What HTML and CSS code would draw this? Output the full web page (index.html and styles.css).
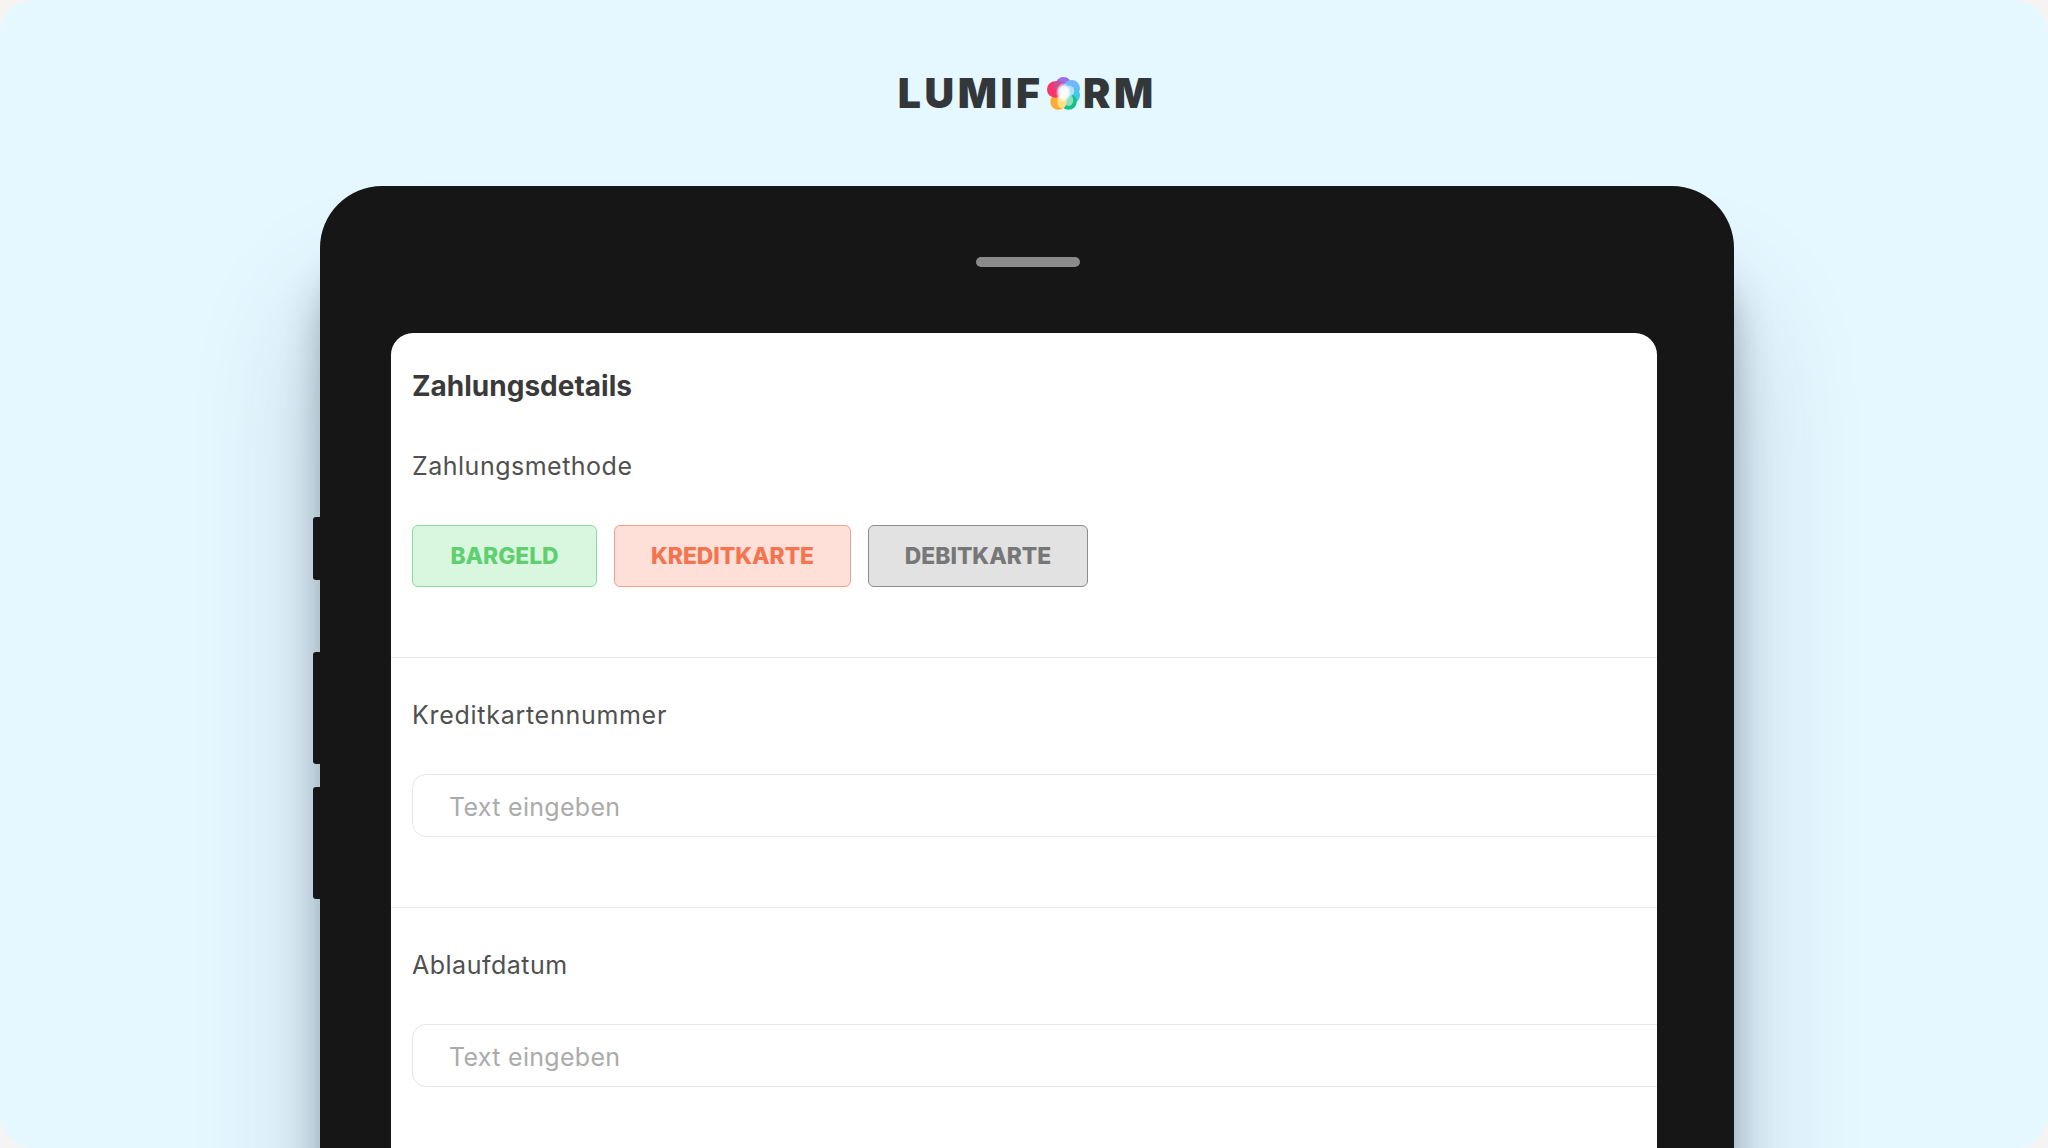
FILE: index.html
```html
<!DOCTYPE html>
<html lang="de">
<head>
<meta charset="utf-8">
<title>Lumiform</title>
<link rel="stylesheet" href="styles.css">
</head>
<body>
<div class="frame">
  <header class="brand">
    <div class="logo">
      <span class="logo-text">LUMIF</span>
      <svg class="logo-mark" viewBox="0 0 32 32" aria-hidden="true">
        <defs>
          <radialGradient id="glow" cx="50%" cy="50%" r="50%">
            <stop offset="0" stop-color="#ffffff"/>
            <stop offset=".6" stop-color="#ffffff" stop-opacity=".9"/>
            <stop offset="1" stop-color="#ffffff" stop-opacity="0"/>
          </radialGradient>
        </defs>
        <circle cx="16" cy="8" r="8" fill="#9c6ee8"/>
        <circle cx="24" cy="11" r="8" fill="#6fb9f8"/>
        <circle cx="24.5" cy="18" r="7.5" fill="#45c8e8"/>
        <circle cx="21" cy="24" r="7.8" fill="#12bf86"/>
        <circle cx="11" cy="24" r="7.8" fill="#ffab38"/>
        <circle cx="8" cy="12" r="8" fill="#f7356b"/>
        <circle cx="11.5" cy="8.5" r="5" fill="#c0549c" opacity=".8"/>
        <ellipse cx="21" cy="22.5" rx="4.5" ry="5.5" fill="#9fe8c8" opacity=".85"/>
        <ellipse cx="14.5" cy="24" rx="4.5" ry="6.5" fill="#ffe08a" opacity=".95"/>
        <ellipse cx="22" cy="13.5" rx="4.5" ry="5" fill="#b8e2fb" opacity=".9"/>
        <ellipse cx="16" cy="15" rx="7.5" ry="9.5" fill="url(#glow)"/>
      </svg>
      <span class="logo-text">RM</span>
    </div>
  </header>

  <div class="device">
    <span class="side-key key-a"></span>
    <span class="side-key key-b"></span>
    <span class="side-key key-c"></span>
    <div class="speaker"></div>
    <main class="screen">
      <section class="group group-first">
        <h1 class="title">Zahlungsdetails</h1>
        <div class="label label-method">Zahlungsmethode</div>
        <div class="choices">
          <div class="choice choice-green">BARGELD</div>
          <div class="choice choice-orange">KREDITKARTE</div>
          <div class="choice choice-grey">DEBITKARTE</div>
        </div>
      </section>
      <section class="group">
        <div class="label label-wide">Kreditkartennummer</div>
        <div class="field">Text eingeben</div>
      </section>
      <section class="group">
        <div class="label">Ablaufdatum</div>
        <div class="field">Text eingeben</div>
      </section>
    </main>
  </div>
</div>
</body>
</html>
```
FILE: styles.css
```css
* { box-sizing: border-box; }
html, body {
  margin: 0;
  height: 100%;
  overflow: hidden;
  background: #f5f4f3;
}
.frame {
  width: 2048px;
  height: 1148px;
  overflow: hidden;
  border-radius: 34px;
  background: #e5f7ff;
  font-family: "Inter", "Liberation Sans", sans-serif;
}
.brand {
  height: 186px;
  display: flex;
  align-items: center;
  justify-content: center;
}
.logo {
  display: flex;
  align-items: center;
  gap: 3px;
  margin-left: 6.6px;
}
.logo-text {
  font-family: "Inter", sans-serif;
  font-weight: 900;
  font-size: 41px;
  line-height: 44px;
  letter-spacing: 3.6px;
  color: #33373a;
}
.logo-mark {
  width: 33px;
  height: 33px;
  margin-right: .4px;
  filter: blur(.5px);
}
.device {
  position: relative;
  width: 1414px;
  height: 1100px;
  margin-left: 320px;
  padding: 71px 77px 0 71px;
  background: #161616;
  border-radius: 62px;
  box-shadow: 0 80px 36px rgba(40, 50, 60, .34), 0 120px 120px rgba(60, 95, 120, .26);
}
.side-key {
  position: absolute;
  left: -7px;
  width: 8px;
  background: #161616;
  border-radius: 3px 0 0 3px;
}
.key-a { top: 331px; height: 63px; }
.key-b { top: 466px; height: 112px; }
.key-c { top: 601px; height: 112px; }
.speaker {
  width: 104px;
  height: 10px;
  margin: 0 auto 66px;
  position: relative;
  left: 4px;
  background: #8b8b8b;
  border-radius: 5px;
}
.screen {
  height: 900px;
  background: #fff;
  border-radius: 22px 22px 0 0;
  overflow: hidden;
}
.group {
  padding: 41px 0 70px 21px;
  border-bottom: 1px solid #e9e9e9;
}
.group-first { padding-top: 38px; }
.title {
  margin: 0 0 49px;
  font-size: 28px;
  line-height: 30px;
  font-weight: 700;
  color: #3a3a3a;
}
.label {
  font-size: 25px;
  line-height: 32px;
  letter-spacing: .5px;
  font-weight: 400;
  color: #505050;
}
.label-wide { letter-spacing: .72px; }
.label-method { margin-bottom: 43px; }
.choices {
  display: flex;
  gap: 17px;
}
.choice {
  height: 62px;
  display: flex;
  align-items: center;
  justify-content: center;
  border: 1.5px solid;
  border-radius: 6px;
  font-size: 22.8px;
  line-height: 60px;
  font-weight: 800;
}
.choice-green { width: 185px; color: #5fcf70; background: #d9f7df; border-color: #8fd9a0; }
.choice-orange { width: 237px; color: #f4744f; background: #ffe0d8; border-color: #f0a08e; }
.choice-grey { width: 220px; color: #777; background: #e2e2e2; border-color: #8c8c8c; }
.group .label + .field { margin-top: 43px; }
.field {
  height: 63px;
  margin-right: -40px;
  padding: 3px 0 0 36px;
  display: flex;
  align-items: center;
  border: 1.5px solid #e6e6e6;
  border-radius: 14px;
  font-size: 25px;
  letter-spacing: .3px;
  color: #ababab;
}
```
